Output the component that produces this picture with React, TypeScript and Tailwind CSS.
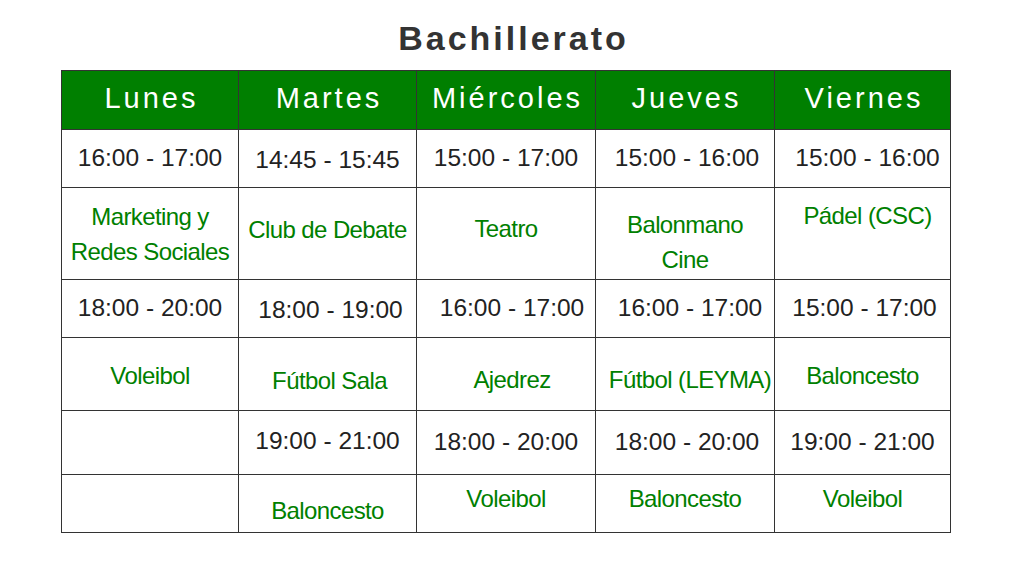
import React from 'react';

type Cell = { text?: string[]; kind: 'time' | 'act'; cls?: string };

const days = ['Lunes', 'Martes', 'Miércoles', 'Jueves', 'Viernes'];

// each row: five cells, cls nudges the text where the original sits off-centre
const rows: Cell[][] = [
  [
    { kind: 'time', text: ['16:00 - 17:00'] },
    { kind: 'time', text: ['14:45 - 15:45'], cls: 'pt-1' },
    { kind: 'time', text: ['15:00 - 17:00'] },
    { kind: 'time', text: ['15:00 - 16:00'], cls: 'pl-1' },
    { kind: 'time', text: ['15:00 - 16:00'], cls: 'pl-[10px]' },
  ],
  [
    { kind: 'act', text: ['Marketing y', 'Redes Sociales'] },
    { kind: 'act', text: ['Club de Debate'], cls: 'pb-2' },
    { kind: 'act', text: ['Teatro'], cls: 'pb-[10px]' },
    { kind: 'act', text: ['Balonmano', 'Cine'], cls: 'pt-4' },
    { kind: 'act', text: ['Pádel (CSC)'], cls: 'pb-9 pl-[10px]' },
  ],
  [
    { kind: 'time', text: ['18:00 - 20:00'] },
    { kind: 'time', text: ['18:00 - 19:00'], cls: 'pt-1 pl-[6px]' },
    { kind: 'time', text: ['16:00 - 17:00'], cls: 'pl-3' },
    { kind: 'time', text: ['16:00 - 17:00'], cls: 'pl-[10px]' },
    { kind: 'time', text: ['15:00 - 17:00'], cls: 'pl-1' },
  ],
  [
    { kind: 'act', text: ['Voleibol'], cls: 'pt-[3px]' },
    { kind: 'act', text: ['Fútbol Sala'], cls: 'pt-[13px] pl-1' },
    { kind: 'act', text: ['Ajedrez'], cls: 'pt-[11px] pl-3' },
    { kind: 'act', text: ['Fútbol (LEYMA)'], cls: 'pt-[11px] pl-[10px]' },
    { kind: 'act', text: ['Baloncesto'], cls: 'pt-[3px]' },
  ],
  [
    { kind: 'time' },
    { kind: 'time', text: ['19:00 - 21:00'], cls: 'pb-[3px]' },
    { kind: 'time', text: ['18:00 - 20:00'] },
    { kind: 'time', text: ['18:00 - 20:00'], cls: 'pl-1' },
    { kind: 'time', text: ['19:00 - 21:00'] },
  ],
  [
    { kind: 'act' },
    { kind: 'act', text: ['Baloncesto'], cls: 'pt-[14px]' },
    { kind: 'act', text: ['Voleibol'], cls: 'pb-[10px]' },
    { kind: 'act', text: ['Baloncesto'], cls: 'pb-[10px]' },
    { kind: 'act', text: ['Voleibol'], cls: 'pb-[10px]' },
  ],
];

export default function App() {
  return (
    <div className="w-[1024px] h-[570px] bg-white font-['Liberation_Sans',Arial,sans-serif]">
      <div className="h-[70px] w-[1024px] flex items-center justify-center pt-[6px] pl-[3px]">
        <h1 className="text-[34px] font-bold tracking-[3px] text-[#333] leading-none">Bachillerato</h1>
      </div>
      <div className="ml-[61px] w-[890px] grid grid-cols-[177px_178px_179px_179px_176px] grid-rows-[59px_58px_92px_58px_73px_64px_58px] border-l border-t border-[#333]">
        {days.map((d) => (
          <div
            key={d}
            className="bg-[#007f00] border-r border-b border-[#333] flex items-center justify-center pb-[4px] pl-[3px]"
          >
            <span className="text-white text-[29px] tracking-[3px] leading-none">{d}</span>
          </div>
        ))}
        {rows.map((row, ri) =>
          row.map((c, ci) => (
            <div
              key={ri + '-' + ci}
              className={
                'border-r border-b border-[#333] flex flex-col items-center justify-center text-center whitespace-nowrap ' +
                (c.cls ?? '')
              }
            >
              {c.text?.map((t) =>
                c.kind === 'time' ? (
                  <span key={t} className="text-[24.5px] text-[#222] leading-none">
                    {t}
                  </span>
                ) : (
                  <span key={t} className="text-[24px] text-[#008000] leading-[35px] tracking-[-0.6px]">
                    {t}
                  </span>
                )
              )}
            </div>
          ))
        )}
      </div>
    </div>
  );
}
